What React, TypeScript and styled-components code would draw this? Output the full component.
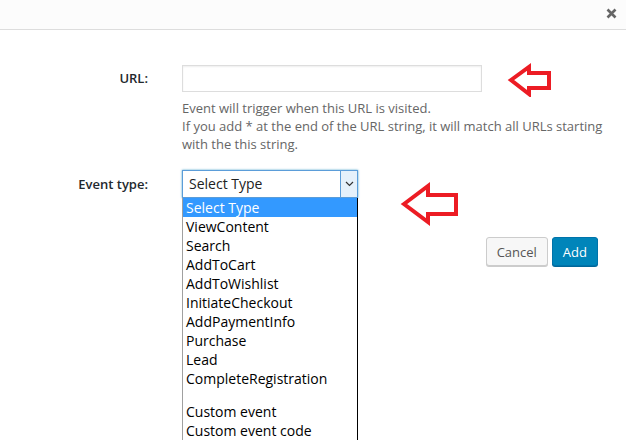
import React from "react";
import styled, { createGlobalStyle } from "styled-components";

const Global = createGlobalStyle`
  html, body { margin: 0; padding: 0; background: #fff; }
  body { font-family: "Open Sans", "Noto Sans", sans-serif; color: #444; }
  * { box-sizing: border-box; }
`;

const Modal = styled.div`
  width: 626px;
  height: 440px;
  background: #fff;
  overflow: hidden;
  display: flex;
  flex-direction: column;
`;

const Header = styled.div`
  height: 30px;
  flex: none;
  background: #fcfcfc;
  border-bottom: 1px solid #ddd;
  display: flex;
  justify-content: flex-end;
  align-items: center;
  padding-right: 6px;
`;

const Close = styled.button`
  width: 18px;
  height: 18px;
  border: 0;
  background: none;
  padding: 0;
  display: flex;
  align-items: center;
  justify-content: center;
  margin-top: -2px;
`;

const Body = styled.div`
  padding: 35px 28px 0 0;
  display: flex;
  flex-direction: column;
`;

const Row = styled.div<{ $mt?: number }>`
  display: grid;
  grid-template-columns: 148px minmax(0, 1fr);
  column-gap: 34px;
  margin-top: ${(p) => p.$mt ?? 0}px;
`;

const Label = styled.label<{ $h: number }>`
  text-align: right;
  font-size: 13px;
  font-weight: 600;
  color: #23282d;
  line-height: ${(p) => p.$h}px;
`;

const Field = styled.div`
  display: flex;
  flex-direction: column;
`;

const ControlLine = styled.div`
  display: flex;
  align-items: flex-start;
`;

const TextInput = styled.input`
  width: 300px;
  height: 27px;
  border: 1px solid #ddd;
  box-shadow: inset 0 1px 2px rgba(0, 0, 0, 0.07);
  background: #fff;
  margin: 0;
  padding: 3px 5px;
  outline: none;
`;

const Desc = styled.p`
  margin: 2px 0 0;
  font-size: 13px;
  line-height: 18px;
  color: #666;
  width: 436px;
`;

const SelectWrap = styled.div`
  position: relative;
  width: 176px;
  flex: none;
`;

const SelectBox = styled.div`
  height: 28px;
  border: 1px solid #5b9dd9;
  box-shadow: 0 0 2px rgba(30, 140, 190, 0.8);
  display: flex;
  align-items: stretch;
  background: #fff;
`;

const SelectValue = styled.div`
  flex: 1;
  font-size: 14px;
  line-height: 26px;
  color: #222;
  padding-left: 6px;
`;

const SelectArrow = styled.div`
  width: 17px;
  background: #e5f1fb;
  border-left: 1px solid #5b9dd9;
  display: flex;
  align-items: center;
  justify-content: center;
`;

const Dropdown = styled.ul`
  position: absolute;
  top: 28px;
  left: 0;
  width: 176px;
  margin: 0;
  padding: 0;
  list-style: none;
  background: #fff;
  border-left: 1px solid #a0a0a0;
  border-right: 1px solid #000;
  z-index: 2;
`;

const Option = styled.li<{ $active?: boolean; $spacer?: boolean }>`
  height: ${(p) => (p.$spacer ? 14 : 19)}px;
  line-height: 19px;
  font-size: 14px;
  padding-left: 3px;
  white-space: nowrap;
  color: ${(p) => (p.$active ? "#fff" : "#000")};
  background: ${(p) => (p.$active ? "#3399ff" : "transparent")};
`;

const Arrow = styled.svg<{ $ml: number; $mt: number }>`
  flex: none;
  margin-left: ${(p) => p.$ml}px;
  margin-top: ${(p) => p.$mt}px;
`;

const Footer = styled.div`
  display: flex;
  justify-content: flex-end;
  gap: 4px;
  margin-top: 11px;
`;

const Button = styled.button<{ $primary?: boolean }>`
  height: 29px;
  padding: 0 10px;
  font-family: "Open Sans", "Noto Sans", sans-serif;
  font-size: 13px;
  border-radius: 3px;
  border: 1px solid ${(p) => (p.$primary ? "#0073aa" : "#ccc")};
  background: ${(p) => (p.$primary ? "#0085ba" : "#f7f7f7")};
  color: ${(p) => (p.$primary ? "#fff" : "#555")};
  box-shadow: 0 1px 0 ${(p) => (p.$primary ? "#006799" : "#ccc")};
`;

const options = [
  "Select Type",
  "ViewContent",
  "Search",
  "AddToCart",
  "AddToWishlist",
  "InitiateCheckout",
  "AddPaymentInfo",
  "Purchase",
  "Lead",
  "CompleteRegistration",
  "",
  "Custom event",
  "Custom event code",
];

const RedArrow = ({ w, h, ml, mt, pts }: { w: number; h: number; ml: number; mt: number; pts: string }) => (
  <Arrow width={w} height={h} viewBox={`0 0 ${w} ${h}`} $ml={ml} $mt={mt}>
    <polygon points={pts} fill="none" stroke="#ec1c24" strokeWidth={4} strokeLinejoin="miter" />
  </Arrow>
);

export default function App() {
  return (
    <>
      <Global />
      <Modal>
        <Header>
          <Close aria-label="close">
            <svg width="11" height="11" viewBox="0 0 11 11">
              <path d="M1.5 1.5 L9.5 9.5 M9.5 1.5 L1.5 9.5" stroke="#666" strokeWidth="2.6" strokeLinecap="butt" />
            </svg>
          </Close>
        </Header>
        <Body>
          <Row>
            <Label $h={27}>URL:</Label>
            <Field>
              <ControlLine>
                <TextInput type="text" />
                <RedArrow w={46} h={34} ml={25} mt={-2} pts="4,17 22,4 22,10 42,10 42,25 22,25 22,31" />
              </ControlLine>
              <Desc>
                Event will trigger when this URL is visited.
                <br />
                If you add * at the end of the URL string, it will match all URLs starting with the this string.
              </Desc>
            </Field>
          </Row>
          <Row $mt={17}>
            <Label $h={28}>Event type:</Label>
            <Field>
              <ControlLine>
                <SelectWrap>
                  <SelectBox>
                    <SelectValue>Select Type</SelectValue>
                    <SelectArrow>
                      <svg width="9" height="6" viewBox="0 0 9 6">
                        <path d="M1 1 L4.5 4.5 L8 1" fill="none" stroke="#333" strokeWidth="1.2" />
                      </svg>
                    </SelectArrow>
                  </SelectBox>
                  <Dropdown>
                    {options.map((o, i) => (
                      <Option key={i} $active={i === 0} $spacer={o === ""}>
                        {o}
                      </Option>
                    ))}
                  </Dropdown>
                </SelectWrap>
                <RedArrow w={60} h={44} ml={42} mt={12} pts="4,22 28,4 28,13 56,13 56,32 28,32 28,40" />
              </ControlLine>
            </Field>
          </Row>
          <Footer>
            <Button>Cancel</Button>
            <Button $primary>Add</Button>
          </Footer>
        </Body>
      </Modal>
    </>
  );
}
